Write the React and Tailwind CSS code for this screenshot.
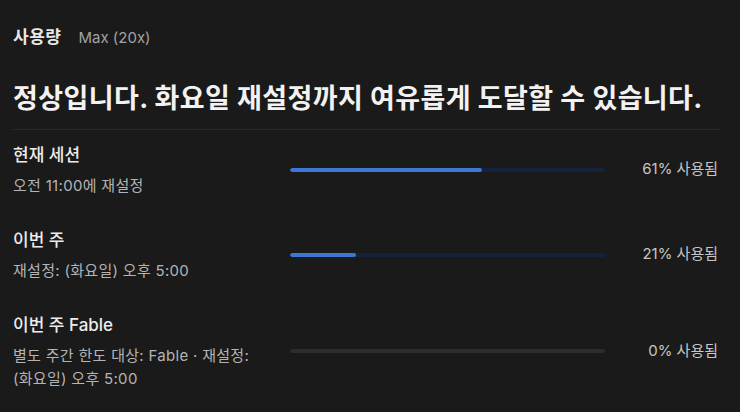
import React from 'react';

const usage = [
  { title: '현재 세션', sub: '오전 11:00에 재설정', pct: 61 },
  { title: '이번 주', sub: '재설정: (화요일) 오후 5:00', pct: 21 },
  { title: '이번 주 Fable', sub: '별도 주간 한도 대상: Fable · 재설정: (화요일) 오후 5:00', pct: 0 },
];

const UsageRow = ({ title, sub, pct }) => {
  const empty = pct === 0;
  return (
    <div className="flex items-center">
      <div className="w-[277px] shrink-0 pr-[18px]">
        <div className="text-[17px] leading-6 font-medium text-[#ececec]">{title}</div>
        <div className="mt-[7px] text-[15px] leading-[23px] tracking-[0.3px] break-keep text-[#b4b4b4]">
          {sub}
        </div>
      </div>
      <div
        className={`w-[315px] h-[4px] rounded-full overflow-hidden ${empty ? 'bg-[#2c2c2c]' : 'bg-[#13233d]'}`}
      >
        <div className="h-full rounded-full bg-[#3d76d4]" style={{ width: `${pct}%` }} />
      </div>
      <div className="flex-1 text-right text-[15px] text-[#c6c6c6]">{pct}% 사용됨</div>
    </div>
  );
};

export default function App() {
  return (
    <div
      className="w-[740px] h-[412px] overflow-hidden bg-[#1a1a1a] pl-[13px] pr-[22px] pt-[25px]"
      style={{ fontFamily: 'Inter, "Noto Sans CJK KR", sans-serif' }}
    >
      <div className="flex items-baseline gap-[17px]">
        <span className="text-[17px] leading-6 tracking-[0.5px] font-semibold text-[#e8e8e8]">사용량</span>
        <span className="text-[15px] text-[#a3a3a3]">Max (20x)</span>
      </div>

      <h1 className="mt-[33px] text-[27px] leading-8 tracking-[0.4px] font-bold text-[#f2f2f2] whitespace-nowrap">
        정상입니다. 화요일 재설정까지 여유롭게 도달할 수 있습니다.
      </h1>

      <div className="mt-[14px] mr-[-2px] h-px bg-[#2a2a2a]" />

      <div className="mt-[13px] flex flex-col gap-[31px]">
        {usage.map(r => (
          <UsageRow key={r.title} {...r} />
        ))}
      </div>
    </div>
  );
}
